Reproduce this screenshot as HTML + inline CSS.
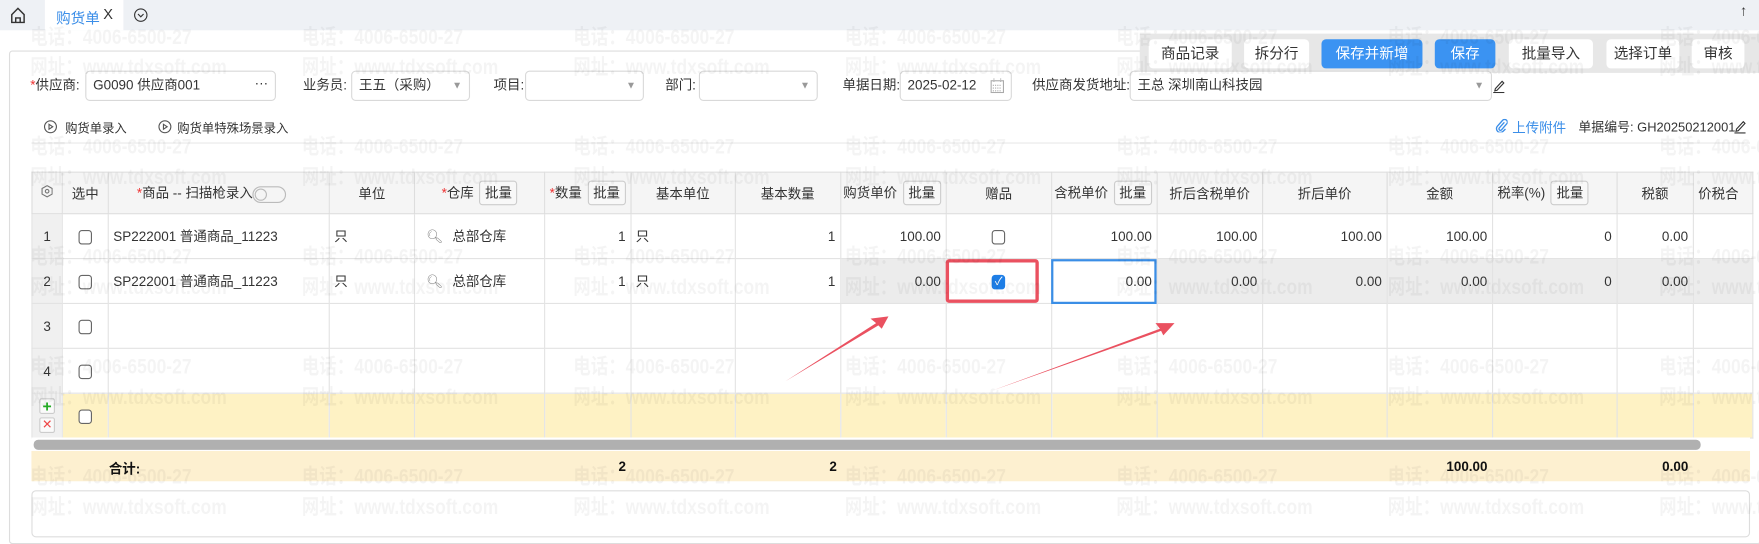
<!DOCTYPE html>
<html><head><meta charset="utf-8">
<style>
*{box-sizing:border-box;margin:0;padding:0}
html,body{width:1759px;height:539px;overflow:hidden;background:#fff}
#s{position:absolute;left:0;top:0;width:1568px;height:480px;transform:scale(1.12181);transform-origin:0 0;font-family:"Liberation Sans","Noto Sans CJK SC",sans-serif;font-size:12px;color:#333}
.a{position:absolute}
.tb{left:0;top:0;width:1568px;height:27px;background:#eef1f5}
.btn{position:absolute;top:35px;height:26px;background:#fff;border-radius:4px;font-size:13px;line-height:26px;text-align:center;color:#333}
.blue{background:#3b93f2;color:#fff}
.inp{position:absolute;top:63px;height:27px;border:1px solid #d9d9d9;border-radius:4px;background:#fff;line-height:25px;padding-left:6px;font-size:12px}
.lbl{position:absolute;top:63px;line-height:27px;font-size:12px}
.arr{position:absolute;right:6px;top:0;color:#999;font-size:9px}
.red{color:#e33}
table{position:absolute;left:28px;top:153px;border-collapse:collapse;table-layout:fixed}
td{border:1px solid #e3e3e3;height:40px;font-size:12px;white-space:nowrap;overflow:hidden;padding:0 4px}
tr.h td{height:37px;background:#f5f5f5;text-align:center;border-color:#ddd}
td.seq{background:#f0f0f0;text-align:center}
.r{text-align:right}
.c{text-align:center}
.cb{display:inline-block;width:12px;height:13px;border:1px solid #666;border-radius:3px;background:#fff;vertical-align:middle}
.pl{display:inline-block;border:1px solid #ccc;border-radius:3px;background:#f8f8f8;padding:0 4px;line-height:20px;margin-left:5px}
tr.g td.gg{background:#ececec}
tr.y td{background:#fef2c4}
.wm{position:absolute;font-weight:bold;font-size:19px;color:rgba(0,0,0,0.045);white-space:nowrap;transform:scaleX(0.82);transform-origin:0 0;pointer-events:none}
</style></head><body><div id="s">
<div class="a tb"></div>
<svg class="a" style="left:9px;top:6px" width="14" height="15" viewBox="0 0 14 15"><path d="M1.5 7 L7 1.5 L12.5 7 V14 H1.5 Z M5 14 V10 H9 V14" fill="none" stroke="#333" stroke-width="1.3"/></svg>
<div class="a" style="left:40px;top:0;width:70px;height:27px;background:#fff"></div>
<div class="a" style="left:50px;top:6px;color:#3b8ee8;font-size:13px">购货单</div>
<div class="a" style="left:92px;top:5px;font-size:13px">X</div>
<svg class="a" style="left:119px;top:7px" width="13" height="13"><circle cx="6.5" cy="6.5" r="5.5" fill="none" stroke="#333"/><path d="M4 5.5 L6.5 8 L9 5.5" fill="none" stroke="#333"/></svg>
<div class="a" style="left:1551px;top:2px;font-size:13px">↑</div>

<div class="a" style="left:8px;top:45px;width:1562px;height:440px;border:1px solid #ddd;border-radius:3px"></div>
<div class="a" style="left:1016px;top:30px;width:552px;height:35px;background:#e7e7e7"></div>
<div class="btn" style="left:1024px;width:74px">商品记录</div>
<div class="btn" style="left:1109px;width:58px">拆分行</div>
<div class="btn blue" style="left:1178px;width:90px">保存并新增</div>
<div class="btn blue" style="left:1279px;width:54px">保存</div>
<div class="btn" style="left:1345px;width:75px">批量导入</div>
<div class="btn" style="left:1432px;width:65px">选择订单</div>
<div class="btn" style="left:1508px;width:47px">审核</div>

<div class="lbl" style="left:27px"><span class="red">*</span>供应商:</div>
<div class="inp" style="left:76px;width:170px">G0090 供应商001<span style="position:absolute;right:6px;top:-2px">···</span></div>
<div class="lbl" style="left:270px">业务员:</div>
<div class="inp" style="left:313px;width:106px">王五（采购）<span class="arr">▼</span></div>
<div class="lbl" style="left:440px">项目:</div>
<div class="inp" style="left:468px;width:106px"><span class="arr">▼</span></div>
<div class="lbl" style="left:593px">部门:</div>
<div class="inp" style="left:623px;width:106px"><span class="arr">▼</span></div>
<div class="lbl" style="left:751px">单据日期:</div>
<div class="inp" style="left:802px;width:100px">2025-02-12<svg style="position:absolute;right:6px;top:6px" width="12" height="13"><rect x="0.5" y="2" width="11" height="10.5" fill="none" stroke="#aaa"/><path d="M3 0v3M9 0v3M2 6h8M2 8.5h8M2 11h8" stroke="#aaa" stroke-dasharray="1 1"/></svg></div>
<div class="lbl" style="left:920px">供应商发货地址:</div>
<div class="inp" style="left:1007px;width:323px">王总 深圳南山科技园<span class="arr">▼</span></div>
<svg class="a" style="left:1331px;top:70px" width="11" height="13"><path d="M2 9 L8 2.5 L9.5 4 L3.5 10.5 L1.5 11Z" fill="none" stroke="#333"/><path d="M0 12.5h10" stroke="#333"/></svg>

<svg class="a" style="left:39px;top:107px" width="12" height="12"><circle cx="6" cy="6" r="5.3" fill="none" stroke="#555"/><path d="M4.7 3.8 L8 6 L4.7 8.2Z" fill="none" stroke="#555"/></svg>
<div class="a" style="left:58px;top:106px;font-size:11px">购货单录入</div>
<svg class="a" style="left:141px;top:107px" width="12" height="12"><circle cx="6" cy="6" r="5.3" fill="none" stroke="#555"/><path d="M4.7 3.8 L8 6 L4.7 8.2Z" fill="none" stroke="#555"/></svg>
<div class="a" style="left:158px;top:106px;font-size:11px">购货单特殊场景录入</div>
<svg class="a" style="left:1333px;top:106px" width="11" height="12"><path d="M8 3 L3.5 8 a1.3 1.3 0 0 0 2 1.7 L10 4.5 a2.4 2.4 0 0 0 -3.5 -3.3 L1.8 6.5 a3.4 3.4 0 0 0 5 4.6 L9 9" fill="none" stroke="#3b8ee8" stroke-width="1.2"/></svg>
<div class="a" style="left:1348px;top:105px;color:#3b8ee8;font-size:12px">上传附件</div>
<div class="a" style="left:1407px;top:105px;font-size:11.5px">单据编号: GH20250212001</div>
<svg class="a" style="left:1546px;top:106px" width="11" height="13"><path d="M2 9 L8 2.5 L9.5 4 L3.5 10.5 L1.5 11Z" fill="none" stroke="#333"/><path d="M0 12.5h10" stroke="#333"/></svg>
<div class="a" style="left:28px;top:127px;width:1532px;height:1px;background:#e8e8e8"></div>

<table>
<colgroup><col style="width:27px"><col style="width:41px"><col style="width:197px"><col style="width:76px"><col style="width:116px"><col style="width:76px"><col style="width:93px"><col style="width:94px"><col style="width:93px"><col style="width:94px"><col style="width:94px"><col style="width:94px"><col style="width:111px"><col style="width:94px"><col style="width:111px"><col style="width:68px"><col style="width:53px"></colgroup>
<tr class="h"><td><svg width="10" height="11"><path d="M5 0.5 L9.5 3 V8 L5 10.5 L0.5 8 V3Z" fill="none" stroke="#777"/><circle cx="5" cy="5.5" r="1.6" fill="none" stroke="#777"/></svg></td><td>选中</td><td style="text-align:left;padding-left:25px"><span class="red">*</span>商品 -- 扫描枪录入<span style="display:inline-block;width:30px;height:15px;border:1px solid #bbb;border-radius:8px;vertical-align:middle;position:relative"><span style="position:absolute;left:1px;top:1px;width:11px;height:11px;border-radius:6px;border:1px solid #bbb"></span></span></td><td>单位</td><td><span class="red">*</span>仓库<span class="pl">批量</span></td><td style="text-align:left"><span class="red">*</span>数量<span class="pl">批量</span></td><td>基本单位</td><td>基本数量</td><td style="text-align:left;padding-left:2px">购货单价<span class="pl">批量</span></td><td>赠品</td><td style="text-align:left;padding-left:2px">含税单价<span class="pl">批量</span></td><td>折后含税单价</td><td>折后单价</td><td>金额</td><td style="text-align:left">税率(%)<span class="pl">批量</span></td><td>税额</td><td style="text-align:left">价税合</td></tr>
<tr><td class="seq">1</td><td class="c"><span class="cb"></span></td><td>SP222001 普通商品_11223</td><td>只</td><td><span style="color:#888;margin:0 8px 0 6px">&#x1F50D;&#xFE0E;</span>总部仓库</td><td class="r">1</td><td>只</td><td class="r">1</td><td class="r">100.00</td><td class="c"><span class="cb"></span></td><td class="r">100.00</td><td class="r">100.00</td><td class="r">100.00</td><td class="r">100.00</td><td class="r">0</td><td class="r">0.00</td><td></td></tr>
<tr class="g"><td class="seq">2</td><td class="c"><span class="cb"></span></td><td>SP222001 普通商品_11223</td><td>只</td><td><span style="color:#888;margin:0 8px 0 6px">&#x1F50D;&#xFE0E;</span>总部仓库</td><td class="r">1</td><td>只</td><td class="r">1</td><td class="r gg">0.00</td><td class="c" style="background:#fff"><span class="cb" style="background:#1e7ee6;border-color:#1e7ee6;color:#fff;font-size:10px;line-height:11px">✓</span></td><td class="r" style="background:#fff;outline:2px solid #3a8ee6;outline-offset:-2px">0.00</td><td class="r gg">0.00</td><td class="r gg">0.00</td><td class="r gg">0.00</td><td class="r gg">0</td><td class="r gg">0.00</td><td class="gg"></td></tr>
<tr><td class="seq">3</td><td class="c"><span class="cb"></span></td><td></td><td></td><td></td><td></td><td></td><td></td><td></td><td></td><td></td><td></td><td></td><td></td><td></td><td></td><td></td></tr>
<tr><td class="seq">4</td><td class="c"><span class="cb"></span></td><td></td><td></td><td></td><td></td><td></td><td></td><td></td><td></td><td></td><td></td><td></td><td></td><td></td><td></td><td></td></tr>
<tr class="y"><td class="seq" style="background:#f0f0f0;padding:0"><div style="width:14px;height:14px;margin:0 auto 3px;border:1px solid #ccc;border-radius:2px;background:#fafafa;color:#2a2;font-weight:bold;line-height:12px;font-size:14px">+</div><div style="width:14px;height:14px;margin:0 auto;border:1px solid #ccc;border-radius:2px;background:#fafafa;color:#e44;line-height:12px;font-size:11px">✕</div></td><td class="c"><span class="cb"></span></td><td></td><td></td><td></td><td></td><td></td><td></td><td></td><td></td><td></td><td></td><td></td><td></td><td></td><td></td><td></td></tr>
</table>
<div class="a" style="left:28px;top:390px;width:1532px;height:12px;background:#fff"></div>
<div class="a" style="left:30px;top:392px;width:1486px;height:9px;background:#b0b0b0;border-radius:4px"></div>
<div class="a" style="left:28px;top:402px;width:1532px;height:27px;background:#fdf0d0"></div>
<div class="a" style="left:97px;top:409px;font-weight:bold;color:#111">合计:</div>
<div class="a" style="left:540px;top:409px;width:18px;text-align:right;font-weight:bold;color:#111">2</div>
<div class="a" style="left:728px;top:409px;width:18px;text-align:right;font-weight:bold;color:#111">2</div>
<div class="a" style="left:1270px;top:409px;width:56px;text-align:right;font-weight:bold;color:#111">100.00</div>
<div class="a" style="left:1460px;top:409px;width:45px;text-align:right;font-weight:bold;color:#111">0.00</div>
<div class="a" style="left:28px;top:437px;width:1532px;height:42px;border:1px solid #ddd;border-radius:4px"></div>

<div class="a" style="left:843px;top:231px;width:83px;height:39px;border:3px solid #ea5160;border-radius:3px"></div>
<svg class="a" style="left:0;top:0" width="1568" height="480"><polygon points="700,340 781,288 776,284 792,282 786,293 783,290" fill="#ea5160"/><polygon points="885,348 1034,293 1030,288 1047,288 1037,299 1035,295" fill="#ea5160"/></svg>

<div id="wm"></div>
</div>
<script>
var w=document.getElementById('wm'),h='';
for(var k=0;k<5;k++)for(var j=0;j<7;j++){var x=27+242*j,y=18+98*k;
h+='<div class="wm" style="left:'+x+'px;top:'+y+'px">电话：4006-6500-27</div><div class="wm" style="left:'+x+'px;top:'+(y+27)+'px">网址：www.tdxsoft.com</div>';}
w.innerHTML=h;
</script>
</body></html>
